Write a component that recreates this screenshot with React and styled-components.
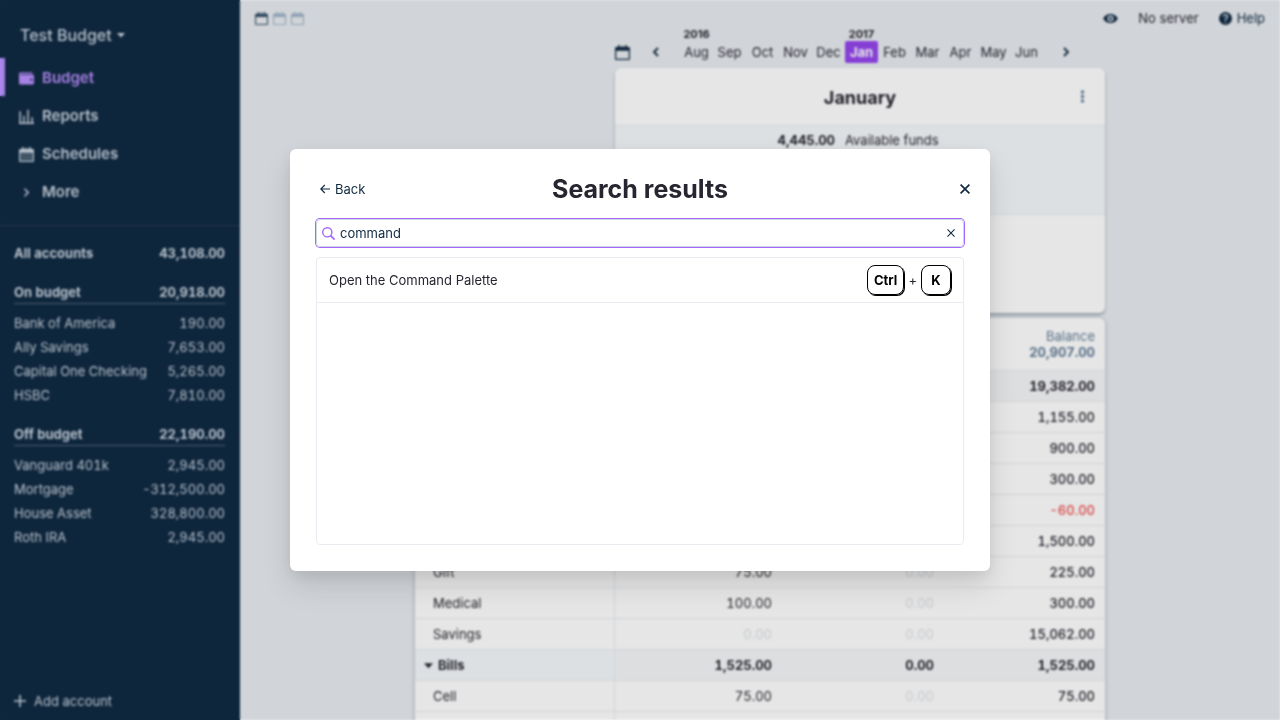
import React, { useState } from 'react';
import styled, { createGlobalStyle, css } from 'styled-components';

const c = {
  navy50: '#f7fafc',
  navy100: '#e8ecf0',
  navy150: '#d9e2ec',
  navy300: '#9fb3c8',
  navy500: '#627d98',
  navy700: '#334e68',
  navy900: '#102a43',
  ink: '#272630',
  purple200: '#b990ff',
  purple300: '#a368fc',
  purple400: '#9446ed',
  red: '#ef4e4e',
};

const GlobalStyle = createGlobalStyle`
  *, *::before, *::after { box-sizing: border-box; }
  html, body, #root { height: 100%; margin: 0; }
  body {
    overflow: hidden;
    font-family: Inter, "Liberation Sans", sans-serif;
    font-size: 13px;
    line-height: 16px;
    color: ${c.ink};
    background: ${c.navy100};
  }
  button, input { font: inherit; color: inherit; }
  h1, h2, h3, p, ul { margin: 0; padding: 0; }
  ul { list-style: none; }
`;

/* ---------- icons ---------- */

const Svg = styled.svg`
  display: block;
  flex: none;
  width: ${p => p.$size || 15}px;
  height: ${p => p.$size || 15}px;
  fill: currentColor;
`;

const CalendarIcon = ({ size, panel }) => (
  <Svg $size={size} viewBox="0 0 24 24" aria-hidden="true">
    {panel && <path d="M2 9h20v13H2z" opacity=".3" />}
    <path
      fillRule="evenodd"
      d="M2 3h3V1a1 1 0 0 1 1-1h1a1 1 0 0 1 1 1v2h3V1h2v2h3V1a1 1 0 0 1 1-1h1a1 1 0 0 1 1 1v2h3a2 2 0 0 1 2 2v17a2 2 0 0 1-2 2H2a2 2 0 0 1-2-2V5a2 2 0 0 1 2-2zm0 6v13h20V9z"
    />
  </Svg>
);
const WalletIcon = () => (
  <Svg viewBox="0 0 20 20" aria-hidden="true">
    <path d="M0 4c0-1.1.9-2 2-2h15a1 1 0 0 1 1 1v1H2v1h17a1 1 0 0 1 1 1v10a2 2 0 0 1-2 2H2a2 2 0 0 1-2-2V4zm16.5 9a1.5 1.5 0 1 0 0-3 1.5 1.5 0 0 0 0 3z" />
  </Svg>
);
const ReportsIcon = () => (
  <Svg viewBox="0 0 20 20" aria-hidden="true">
    <path d="M0 18h20v2H0zM.5 3h2v15h-2zm5 6h2v9h-2zm5.500-8h2v17h-2zm5.500 10h2v7h-2z" />
  </Svg>
);
const ChevronIcon = ({ size }) => (
  <Svg $size={size} viewBox="0 0 20 20" aria-hidden="true">
    <path d="M12.95 10.707l.707-.707L8 4.343 6.586 5.757 10.828 10l-4.242 4.243L8 15.657l4.95-4.95z" />
  </Svg>
);
const MonthArrowIcon = ({ left }) => (
  <Svg $size={10} viewBox="0 0 10 10" aria-hidden="true">
    <path
      d={left ? 'M7 1L3 5l4 4' : 'M3 1l4 4-4 4'}
      fill="none"
      stroke="currentColor"
      strokeWidth="1.800"
    />
  </Svg>
);
const CaretIcon = ({ size }) => (
  <Svg $size={size} viewBox="0 0 8 8" aria-hidden="true">
    <path d="M0 2h8L4 6.500z" />
  </Svg>
);
const PlusIcon = () => (
  <Svg $size={12} viewBox="0 0 12 12" aria-hidden="true">
    <path d="M5.200 0h1.600v5.200H12v1.600H6.800V12H5.200V6.800H0V5.200h5.200z" />
  </Svg>
);
const EyeIcon = () => (
  <Svg viewBox="0 0 20 20" aria-hidden="true">
    <path d="M.2 10a11 11 0 0 1 19.600 0A11 11 0 0 1 .2 10zm9.800 4a4 4 0 1 0 0-8 4 4 0 0 0 0 8zm0-2a2 2 0 1 1 0-4 2 2 0 0 1 0 4z" />
  </Svg>
);
const HelpIcon = () => (
  <Svg $size={13} viewBox="0 0 20 20" aria-hidden="true">
    <path d="M10 20a10 10 0 1 1 0-20 10 10 0 0 1 0 20zm2-13c0 .28-.21.8-.42 1L10 9.580c-.57.58-1 1.600-1 2.420v1h2v-1c0-.29.210-.8.420-1L13 9.420c.57-.58 1-1.600 1-2.420a4 4 0 1 0-8 0h2a2 2 0 1 1 4 0zm-3 8v2h2v-2H9z" />
  </Svg>
);
const DotsIcon = () => (
  <Svg $size={13} viewBox="0 0 13 13" aria-hidden="true">
    <circle cx="6.500" cy="2" r="1.700" />
    <circle cx="6.500" cy="6.500" r="1.700" />
    <circle cx="6.500" cy="11" r="1.700" />
  </Svg>
);
const BackIcon = () => (
  <Svg $size={10} viewBox="0 0 10 10" aria-hidden="true">
    <path d="M10 5H1M4.800 1L.8 5l4 4" fill="none" stroke="currentColor" strokeWidth="1.100" />
  </Svg>
);
const CrossIcon = ({ size, weight }) => (
  <Svg $size={size} viewBox="0 0 10 10" aria-hidden="true">
    <path d="M.6.6l8.800 8.800M9.400.6L.6 9.400" fill="none" stroke="currentColor" strokeWidth={weight} />
  </Svg>
);
const SearchIcon = () => (
  <Svg $size={13} viewBox="0 0 13 13" aria-hidden="true">
    <circle cx="5.300" cy="5.300" r="4.600" fill="none" stroke="currentColor" strokeWidth="1.400" />
    <path d="M8.600 8.600l4 4" fill="none" stroke="currentColor" strokeWidth="1.800" />
  </Svg>
);

/* ---------- shared ---------- */

const PlainButton = styled.button`
  display: flex;
  align-items: center;
  gap: ${p => p.$gap || 0}px;
  padding: 0;
  border: 0;
  background: none;
  cursor: pointer;
`;

const Page = styled.div`
  display: flex;
  height: 100%;
  overflow: hidden;
`;

/* ---------- sidebar ---------- */

const Sidebar = styled.aside`
  display: flex;
  flex-direction: column;
  flex: none;
  width: 240px;
  color: #cbd6e2;
  background: ${c.navy900};
`;

const BudgetName = styled(PlainButton)`
  margin: 24px 20px 12px;
  font-size: 16px;
  font-weight: 500;
  line-height: 22px;
`;

const NavLink = styled.a`
  display: flex;
  align-items: center;
  gap: 8px;
  height: 38px;
  padding: 2px 0 0 14px;
  border-left: 5px solid transparent;
  font-size: 15px;
  font-weight: 600;
  color: inherit;
  text-decoration: none;
  ${p =>
    p.$active &&
    css`
      border-color: ${c.purple200};
      color: ${c.purple200};
    `}
`;

const Divider = styled.hr`
  width: 100%;
  height: 1px;
  margin: 15px 0;
  border: 0;
  background: #243b53;
`;

const AccountGroup = styled.section`
  padding: 0 15px 0 14px;
  margin-bottom: 16px;
`;

const Account = styled.a`
  display: flex;
  justify-content: space-between;
  align-items: center;
  height: 24px;
  color: inherit;
  text-decoration: none;
  font-variant-numeric: tabular-nums;
  ${p => p.$strong && 'font-weight: 700;'}
  ${p =>
    p.$line &&
    css`
      height: 23px;
      margin-bottom: 7px;
      border-bottom: 1px solid #52667b;
    `}
`;

const AddAccount = styled(PlainButton)`
  margin: auto 14px 11px;
`;

/* ---------- main area ---------- */

const Main = styled.main`
  flex: 1;
  min-width: 0;
  overflow: hidden;
`;

const TopBar = styled.header`
  display: flex;
  justify-content: space-between;
  height: 28px;
  padding: 8px 15px 0;
`;

const Tools = styled.div`
  display: flex;
  align-items: center;
  gap: ${p => p.$gap}px;
`;

const ToolButton = styled(PlainButton)`
  color: ${c.navy900};
`;

const CountButton = styled(PlainButton)`
  color: ${p => (p.$on ? c.navy700 : c.navy300)};
`;

const Budget = styled.div`
  width: 100%;
  max-width: 690px;
  margin: 0 auto;
`;

const MonthColumn = styled.div`
  margin-left: 200px;
`;

const Picker = styled.nav`
  display: flex;
  align-items: flex-end;
  height: 35px;
  margin-bottom: 5px;
  padding-right: 16px;
  color: ${c.navy900};
`;

const PickerButton = styled(PlainButton)`
  justify-content: ${p => p.$justify || 'center'};
  height: 22px;
  width: ${p => p.$width}px;
`;

const Months = styled.ul`
  display: flex;
  flex: 1;
  color: ${c.ink};
`;

const Month = styled.li`
  flex: 1;
  min-width: 0;
  text-align: center;
`;

const Year = styled.div`
  height: 13px;
  font-size: 11px;
  font-weight: 700;
  line-height: 13px;
  white-space: nowrap;
`;

const MonthButton = styled(PlainButton)`
  justify-content: center;
  width: 100%;
  height: 22px;
  border-radius: 2px;
  ${p =>
    p.$current &&
    css`
      font-weight: 700;
      color: #fff;
      background: ${c.purple400};
    `}
`;

const Summary = styled.section`
  height: 245px;
  margin-bottom: 5px;
  border-radius: 6px;
  overflow: hidden;
  background: #fff;
  box-shadow: 0 2px 3px rgba(16, 42, 67, 0.35);
`;

const SummaryHead = styled.div`
  display: grid;
  grid-template-columns: 1fr auto 1fr;
  align-items: center;
  height: 57px;
  padding: 0 16px;
`;

const SummaryTitle = styled.h2`
  grid-column: 2;
  padding-top: 2px;
  font-size: 18px;
  font-weight: 700;
  line-height: 24px;
`;

const MoreButton = styled(PlainButton)`
  justify-self: end;
  color: ${c.navy500};
`;

const Funds = styled.div`
  display: grid;
  grid-template-columns: 220px 1fr;
  gap: 10px;
  height: 90px;
  padding-top: 6px;
  border: solid ${c.navy100};
  border-width: 1px 0;
  background: #f5f9fb;
`;

const Amount = styled.strong`
  text-align: right;
  font-weight: 700;
  font-variant-numeric: tabular-nums;
`;

const Table = styled.table`
  width: 100%;
  table-layout: fixed;
  border-spacing: 0;
  border-radius: 6px 6px 0 0;
  overflow: hidden;
  background: #fff;
  box-shadow: 0 1px 4px rgba(16, 42, 67, 0.3);
  font-variant-numeric: tabular-nums;
`;

const Col = styled.col`
  width: ${p => p.$width}px;
`;

const HeadCell = styled.th`
  height: 53px;
  padding: 0 10px;
  border-bottom: 1px solid ${c.navy100};
  text-align: right;
  font-weight: 400;
  color: ${c.navy500};
  strong { display: block; font-weight: 700; }
`;

const Name = styled.th`
  height: 31px;
  padding: 0 0 0 ${p => (p.$group ? 9 : 18)}px;
  border: solid ${c.navy100};
  border-width: 0 1px 1px 0;
  text-align: left;
  font-weight: ${p => (p.$group ? 700 : 400)};
  background: ${p => (p.$group ? '#f5f9fb' : 'transparent')};
`;

const tones = { muted: '#dde2e7', negative: c.red, normal: 'inherit' };

const Cell = styled.td`
  height: 31px;
  padding: 0 10px;
  border-bottom: 1px solid ${c.navy100};
  text-align: right;
  font-weight: ${p => (p.$group ? 700 : p.$balance ? 500 : 400)};
  color: ${p => tones[p.$tone || 'normal']};
  background: ${p => (p.$group ? '#f6f7f9' : 'transparent')};
`;

/* ---------- dialog ---------- */

const Overlay = styled.div`
  position: fixed;
  inset: 0;
  display: flex;
  align-items: center;
  justify-content: center;
  padding: 20px;
  backdrop-filter: blur(1px) brightness(0.9);
`;

const Dialog = styled.section`
  width: 100%;
  max-width: 700px;
  padding: 20px 26px 26px;
  border-radius: 6px;
  background: #fff;
  box-shadow: 0 15px 30px rgba(0, 0, 0, 0.11), 0 5px 15px rgba(0, 0, 0, 0.08);
`;

const DialogHead = styled.header`
  display: grid;
  grid-template-columns: 1fr auto 1fr;
  align-items: center;
  height: 40px;
  margin-bottom: 10px;
`;

const DialogTitle = styled.h1`
  font-size: 25px;
  font-weight: 700;
  line-height: 30px;
`;

const BackButton = styled(PlainButton)`
  justify-self: start;
  margin-left: 4px;
  color: ${c.navy900};
`;

const CloseButton = styled(PlainButton)`
  justify-self: end;
  margin-right: -6px;
  color: ${c.navy900};
`;

const SearchBox = styled.label`
  display: flex;
  align-items: center;
  gap: 5px;
  height: 28px;
  padding: 0 8px 0 5px;
  border: 1px solid #cfd8e2;
  border-radius: 4px;
  box-shadow: 0 0 0 1px ${c.purple300};
  color: ${c.purple300};
`;

const SearchInput = styled.input`
  flex: 1;
  min-width: 0;
  padding: 0;
  border: 0;
  outline: 0;
  background: none;
  color: ${c.navy900};
`;

const ClearButton = styled(PlainButton)`
  color: ${c.navy900};
`;

const Results = styled.ul`
  min-height: 288px;
  margin-top: 10px;
  border: 1px solid ${c.navy100};
  border-radius: 4px;
`;

const Result = styled.li`
  display: flex;
  align-items: center;
  justify-content: space-between;
  height: 45px;
  padding: 0 12px;
  border-bottom: 1px solid ${c.navy100};
`;

const Keys = styled.span`
  display: flex;
  align-items: center;
  gap: 4px;
`;

const Key = styled.kbd`
  min-width: 30px;
  padding: 5px 6px;
  border: 1px solid #000;
  border-radius: 8px;
  box-shadow: 1px 1px 0 #000;
  font-family: inherit;
  font-weight: 700;
  line-height: 18px;
  text-align: center;
  color: #000;
`;

/* ---------- data ---------- */

const accountGroups = [
  { name: 'All accounts', total: '43,108.00', items: [] },
  {
    name: 'On budget',
    total: '20,918.00',
    items: [
      ['Bank of America', '190.00'],
      ['Ally Savings', '7,653.00'],
      ['Capital One Checking', '5,265.00'],
      ['HSBC', '7,810.00'],
    ],
  },
  {
    name: 'Off budget',
    total: '22,190.00',
    items: [
      ['Vanguard 401k', '2,945.00'],
      ['Mortgage', '-312,500.00'],
      ['House Asset', '328,800.00'],
      ['Roth IRA', '2,945.00'],
    ],
  },
];

const months = ['Aug', 'Sep', 'Oct', 'Nov', 'Dec', 'Jan', 'Feb', 'Mar', 'Apr', 'May', 'Jun'];
const years = { Aug: '2016', Jan: '2017' };

const rows = [
  { group: true, balance: '19,382.00' },
  { balance: '1,155.00' },
  { balance: '900.00' },
  { balance: '300.00' },
  { balance: '-60.00' },
  { balance: '1,500.00' },
  { name: 'Gift', budgeted: '75.00', spent: '0.00', balance: '225.00' },
  { name: 'Medical', budgeted: '100.00', spent: '0.00', balance: '300.00' },
  { name: 'Savings', budgeted: '0.00', spent: '0.00', balance: '15,062.00' },
  { name: 'Bills', group: true, budgeted: '1,525.00', spent: '0.00', balance: '1,525.00' },
  { name: 'Cell', budgeted: '75.00', spent: '0.00', balance: '75.00' },
  {},
];

const GroupName = styled.span`
  display: flex;
  align-items: center;
  gap: 5px;
`;

function toneOf(value, group) {
  if (!value || group) return 'normal';
  if (value === '0.00') return 'muted';
  return value.startsWith('-') ? 'negative' : 'normal';
}

function BudgetRow({ row }) {
  const { name, group, budgeted, spent, balance } = row;
  return (
    <tr>
      <Name scope="row" $group={group}>
        {group && name ? (
          <GroupName>
            <CaretIcon size={9} />
            {name}
          </GroupName>
        ) : (
          name
        )}
      </Name>
      <Cell $group={group} $tone={toneOf(budgeted, group)}>{budgeted}</Cell>
      <Cell $group={group} $tone={toneOf(spent, group)}>{spent}</Cell>
      <Cell $group={group} $balance $tone={toneOf(balance, group)}>{balance}</Cell>
    </tr>
  );
}

function SideNav() {
  return (
    <Sidebar>
      <BudgetName type="button" $gap={5}>
        Test Budget
        <CaretIcon size={8} />
      </BudgetName>
      <nav>
        <NavLink href="#budget" $active><WalletIcon />Budget</NavLink>
        <NavLink href="#reports"><ReportsIcon />Reports</NavLink>
        <NavLink href="#schedules"><CalendarIcon panel />Schedules</NavLink>
        <NavLink href="#more"><ChevronIcon />More</NavLink>
      </nav>
      <Divider />
      {accountGroups.map(g => (
        <AccountGroup key={g.name}>
          <Account href="#accounts" $strong $line={g.items.length > 0}>
            <span>{g.name}</span>
            <span>{g.total}</span>
          </Account>
          {g.items.map(([name, amount]) => (
            <Account key={name} href="#account">
              <span>{name}</span>
              <span>{amount}</span>
            </Account>
          ))}
        </AccountGroup>
      ))}
      <AddAccount type="button" $gap={8}>
        <PlusIcon />
        Add account
      </AddAccount>
    </Sidebar>
  );
}

function SearchDialog() {
  const [query, setQuery] = useState('command');
  return (
    <Overlay>
      <Dialog role="dialog" aria-modal="true" aria-labelledby="dialog-title">
        <DialogHead>
          <BackButton type="button" $gap={5}>
            <BackIcon />
            Back
          </BackButton>
          <DialogTitle id="dialog-title">Search results</DialogTitle>
          <CloseButton type="button" aria-label="Close">
            <CrossIcon size={10} weight="1.700" />
          </CloseButton>
        </DialogHead>
        <SearchBox>
          <SearchIcon />
          <SearchInput
            type="text"
            aria-label="Search"
            value={query}
            onChange={e => setQuery(e.target.value)}
          />
          <ClearButton type="button" aria-label="Clear" onClick={() => setQuery('')}>
            <CrossIcon size={8} weight="1.300" />
          </ClearButton>
        </SearchBox>
        <Results>
          <Result>
            <span>Open the Command Palette</span>
            <Keys>
              <Key>Ctrl</Key>
              +
              <Key>K</Key>
            </Keys>
          </Result>
        </Results>
      </Dialog>
    </Overlay>
  );
}

export default function App() {
  return (
    <>
      <GlobalStyle />
      <Page>
        <SideNav />
        <Main>
          <TopBar>
            <Tools $gap={5}>
              {[1, 2, 3].map(n => (
                <CountButton key={n} type="button" $on={n === 1} aria-label={`Months: ${n}`}>
                  <CalendarIcon size={13} />
                </CountButton>
              ))}
            </Tools>
            <Tools $gap={20}>
              <ToolButton type="button" aria-label="Toggle privacy"><EyeIcon /></ToolButton>
              <PlainButton type="button">No server</PlainButton>
              <ToolButton type="button" $gap={5}><HelpIcon />Help</ToolButton>
            </Tools>
          </TopBar>
          <Budget>
            <MonthColumn>
              <Picker>
                <PickerButton type="button" $width={36} $justify="flex-start" aria-label="Today">
                  <CalendarIcon size={15} />
                </PickerButton>
                <PickerButton type="button" $width={29} $justify="flex-start" aria-label="Previous month">
                  <MonthArrowIcon left />
                </PickerButton>
                <Months>
                  {months.map(m => (
                    <Month key={m}>
                      <Year>{years[m]}</Year>
                      <MonthButton type="button" $current={m === 'Jan'}>{m}</MonthButton>
                    </Month>
                  ))}
                </Months>
                <PickerButton type="button" $width={46} aria-label="Next month">
                  <MonthArrowIcon />
                </PickerButton>
              </Picker>
              <Summary>
                <SummaryHead>
                  <SummaryTitle>January</SummaryTitle>
                  <MoreButton type="button" aria-label="Menu"><DotsIcon /></MoreButton>
                </SummaryHead>
                <Funds>
                  <Amount>4,445.00</Amount>
                  <span>Available funds</span>
                </Funds>
              </Summary>
            </MonthColumn>
            <Table>
              <colgroup>
                <Col $width={200} />
                <Col $width={167} />
                <Col $width={162} />
                <col />
              </colgroup>
              <thead>
                <tr>
                  <HeadCell as="td" />
                  <HeadCell as="td" />
                  <HeadCell as="td" />
                  <HeadCell scope="col">
                    Balance
                    <strong>20,907.00</strong>
                  </HeadCell>
                </tr>
              </thead>
              <tbody>
                {rows.map((row, i) => (
                  <BudgetRow key={i} row={row} />
                ))}
              </tbody>
            </Table>
          </Budget>
        </Main>
      </Page>
      <SearchDialog />
    </>
  );
}
